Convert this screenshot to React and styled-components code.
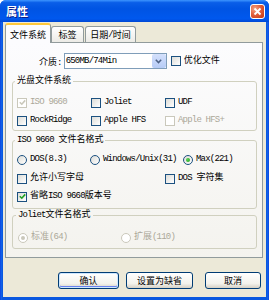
import React from 'react';
import styled, { createGlobalStyle } from 'styled-components';

// ---------------------------------------------------------------------------
// global
// ---------------------------------------------------------------------------

const GlobalStyle = createGlobalStyle`
  html, body {
    margin: 0;
    padding: 0;
    background: #ffffff;
  }
`;

// ---------------------------------------------------------------------------
// window frame
// ---------------------------------------------------------------------------

const Window = styled.div`
  width: 269px;
  height: 300px;
  box-sizing: border-box;
  display: flex;
  flex-direction: column;
  overflow: hidden;
  border-radius: 6px 6px 0 0;
  background: linear-gradient(
    to right,
    #0831d9 0,
    #166aee 1px,
    #0a58e0 2px,
    #0a58e0 calc(100% - 2px),
    #166aee calc(100% - 1px),
    #0831d9 100%
  );
  font-family: "Liberation Mono", "Noto Sans CJK SC", monospace;
  font-size: 9px;
  color: #000000;
`;

const TitleBar = styled.div`
  flex: none;
  height: 22px;
  display: flex;
  align-items: center;
  justify-content: space-between;
  padding: 0 4px 0 6px;
  background: linear-gradient(
    to bottom,
    #3d95ff 0%,
    #0a5ee8 12%,
    #0054e3 40%,
    #0058ee 85%,
    #0048d4 100%
  );
`;

const Title = styled.span`
  font-family: "Noto Sans CJK SC", sans-serif;
  font-weight: 700;
  font-size: 11px;
  color: #ffffff;
  text-shadow: 1px 1px 0 #0a1d8c;
`;

const CloseButton = styled.div`
  width: 15px;
  height: 15px;
  box-sizing: border-box;
  border: 1px solid #ffffff;
  border-radius: 3px;
  display: flex;
  align-items: center;
  justify-content: center;
  background: radial-gradient(circle at 30% 30%, #f5a585, #e2603d 45%, #c2350f 100%);
`;

const Client = styled.div`
  flex: 1;
  margin: 0 3px 3px;
  padding: 1px 3px 0 2px;
  display: flex;
  flex-direction: column;
  background: #ece9d8;
`;

// ---------------------------------------------------------------------------
// tabs
// ---------------------------------------------------------------------------

const TabRow = styled.div`
  height: 19px;
  display: flex;
  align-items: flex-end;
  position: relative;
  z-index: 1;
`;

const Tab = styled.div`
  width: ${(p) => p.$w}px;
  height: ${(p) => (p.$active ? 20 : 16)}px;
  margin-right: ${(p) => p.$gap || 0}px;
  margin-bottom: ${(p) => (p.$active ? -1 : 0)}px;
  box-sizing: border-box;
  display: flex;
  align-items: center;
  justify-content: center;
  border: 1px solid #919b9c;
  border-bottom: none;
  border-top: ${(p) => (p.$active ? '2px solid #ffc83c' : '1px solid #919b9c')};
  border-radius: 3px 3px 0 0;
  background: ${(p) => (p.$active ? '#fcfcfe' : 'linear-gradient(#ffffff, #ecebe6)')};
  white-space: nowrap;
`;

const Panel = styled.div`
  height: 216px;
  box-sizing: border-box;
  padding: 10px 5px 0 6px;
  display: flex;
  flex-direction: column;
  border: 1px solid #919b9c;
  background: linear-gradient(#fcfcfe, #f4f3ee);
`;

// ---------------------------------------------------------------------------
// form parts
// ---------------------------------------------------------------------------

const L = styled.span`
  letter-spacing: -0.8px;
`;

const MediaRow = styled.div`
  height: 16px;
  display: flex;
  align-items: center;
  padding-left: 27px;
`;

const FieldLabel = styled.span`
  margin-right: 2px;
`;

const Select = styled.div`
  width: 103px;
  height: 16px;
  box-sizing: border-box;
  margin-right: 4px;
  display: flex;
  align-items: center;
  border: 1px solid #7f9db9;
  background: #ffffff;
`;

const SelectText = styled.span`
  flex: 1;
  padding-left: 1px;
`;

const DropButton = styled.span`
  width: 14px;
  height: 14px;
  display: flex;
  align-items: center;
  justify-content: center;
  border-radius: 2px;
  background: linear-gradient(#d4e0fc, #b6cbf6);
`;

const Group = styled.fieldset`
  margin: ${(p) => p.$mt}px 0 0;
  padding: ${(p) => p.$pad};
  min-width: 0;
  border: 1px solid #d0d0bf;
  border-radius: 3px;
`;

const Legend = styled.legend`
  padding: 0 2px;
  margin-left: -2px;
  line-height: 11px;
`;

const Stack = styled.div`
  display: flex;
  flex-direction: column;
  gap: ${(p) => p.$gap}px;
`;

const OptionGrid = styled.div`
  display: grid;
  grid-template-columns: ${(p) => p.$cols};
  row-gap: ${(p) => p.$rowGap || 0}px;
`;

const Option = styled.label`
  height: 11px;
  display: flex;
  align-items: center;
  gap: 3px;
  line-height: 11px;
  white-space: nowrap;
  color: ${(p) => (p.$disabled ? '#aca899' : '#000000')};
`;

const Box = styled.span`
  flex: none;
  width: 10px;
  height: 10px;
  box-sizing: border-box;
  display: flex;
  align-items: center;
  justify-content: center;
  border: 1px solid ${(p) => (p.$disabled ? '#cac8bb' : '#1c5180')};
  background: ${(p) => (p.$disabled ? '#ffffff' : 'linear-gradient(135deg, #dcdcd7, #ffffff)')};
`;

const Circle = styled(Box)`
  border-radius: 50%;
`;

const Dot = styled.span`
  width: 4px;
  height: 4px;
  border-radius: 50%;
  background: ${(p) =>
    p.$disabled ? '#cac8bb' : 'radial-gradient(circle at 35% 35%, #55d351, #21a121)'};
`;

// ---------------------------------------------------------------------------
// buttons
// ---------------------------------------------------------------------------

const ButtonRow = styled.div`
  display: flex;
  padding: 14px 0 0 53px;
`;

const Button = styled.button`
  width: ${(p) => p.$w}px;
  height: 17px;
  margin-left: ${(p) => p.$ml || 0}px;
  padding: 0;
  border: 1px solid #003c74;
  border-radius: 3px;
  font-family: "Noto Sans CJK SC", sans-serif;
  font-size: 9px;
  color: #000000;
  background: linear-gradient(#ffffff, #f3f2ec 70%, #d6d0c5);
  box-shadow: ${(p) => (p.$default ? 'inset 0 0 0 1px #cee7ff, inset 0 -1px 0 1px #6982ee' : 'none')};
`;

// ---------------------------------------------------------------------------
// small pieces
// ---------------------------------------------------------------------------

const Check = ({ checked, disabled, children }) => (
  <Option $disabled={disabled}>
    <Box $disabled={disabled}>
      {checked && (
        <svg width="7" height="7" viewBox="0 0 7 7">
          <path d="M0.8 3.2 L2.8 5.2 L6.2 1.4" fill="none"
            stroke={disabled ? '#cac8bb' : '#21a121'} strokeWidth="1.6" />
        </svg>
      )}
    </Box>
    <span>{children}</span>
  </Option>
);

const Radio = ({ checked, disabled, children }) => (
  <Option $disabled={disabled}>
    <Circle $disabled={disabled}>{checked && <Dot $disabled={disabled} />}</Circle>
    <span>{children}</span>
  </Option>
);

export default function App() {
  return (
    <>
      <GlobalStyle />
      <Window>
        <TitleBar>
          <Title>属性</Title>
          <CloseButton>
            <svg width="9" height="9" viewBox="0 0 9 9">
              <path d="M1.5 1.5 L7.5 7.5 M7.5 1.5 L1.5 7.5" stroke="#ffffff" strokeWidth="1.8" />
            </svg>
          </CloseButton>
        </TitleBar>

        <Client>
          <TabRow>
            <Tab $active $w={46}>文件系统</Tab>
            <Tab $w={33} $gap={1}>标签</Tab>
            <Tab $w={51}>日期<L>/</L>时间</Tab>
          </TabRow>

          <Panel>
            <MediaRow>
              <FieldLabel>介质<L>:</L></FieldLabel>
              <Select>
                <SelectText><L>650MB/74Min</L></SelectText>
                <DropButton>
                  <svg width="7" height="5" viewBox="0 0 7 5">
                    <path d="M0.8 0.8 L3.5 3.6 L6.2 0.8" fill="none" stroke="#4d6185" strokeWidth="1.5" />
                  </svg>
                </DropButton>
              </Select>
              <Check>优化文件</Check>
            </MediaRow>

            <Group $mt={7} $pad="10px 4px 4px">
              <Legend>光盘文件系统</Legend>
              <OptionGrid $cols="74px 74px 1fr" $rowGap={7}>
                <Check checked disabled><L>ISO 9660</L></Check>
                <Check><L>Joliet</L></Check>
                <Check><L>UDF</L></Check>
                <Check><L>RockRidge</L></Check>
                <Check><L>Apple HFS</L></Check>
                <Check disabled><L>Apple HFS+</L></Check>
              </OptionGrid>
            </Group>

            <Group $mt={4} $pad="8px 4px 6px">
              <Legend><L>ISO 9660 </L>文件名格式</Legend>
              <Stack $gap={8}>
                <OptionGrid $cols="73px 93px 1fr">
                  <Radio><L>DOS(8.3)</L></Radio>
                  <Radio><L>Windows/Unix(31)</L></Radio>
                  <Radio checked><L>Max(221)</L></Radio>
                </OptionGrid>
                <OptionGrid $cols="148px 1fr" $rowGap={7}>
                  <Check>允许小写字母</Check>
                  <Check><L>DOS </L>字符集</Check>
                  <Check checked>省略<L>ISO 9660</L>版本号</Check>
                </OptionGrid>
              </Stack>
            </Group>

            <Group $mt={1} $pad="11px 4px 5px 5px">
              <Legend><L>Joliet</L>文件名格式</Legend>
              <OptionGrid $cols="103px 1fr">
                <Radio checked disabled>标准<L>(64)</L></Radio>
                <Radio disabled>扩展<L>(110)</L></Radio>
              </OptionGrid>
            </Group>
          </Panel>

          <ButtonRow>
            <Button $default $w={61}>确认</Button>
            <Button $w={67} $ml={7}>设置为缺省</Button>
            <Button $w={56} $ml={12}>取消</Button>
          </ButtonRow>
        </Client>
      </Window>
    </>
  );
}
